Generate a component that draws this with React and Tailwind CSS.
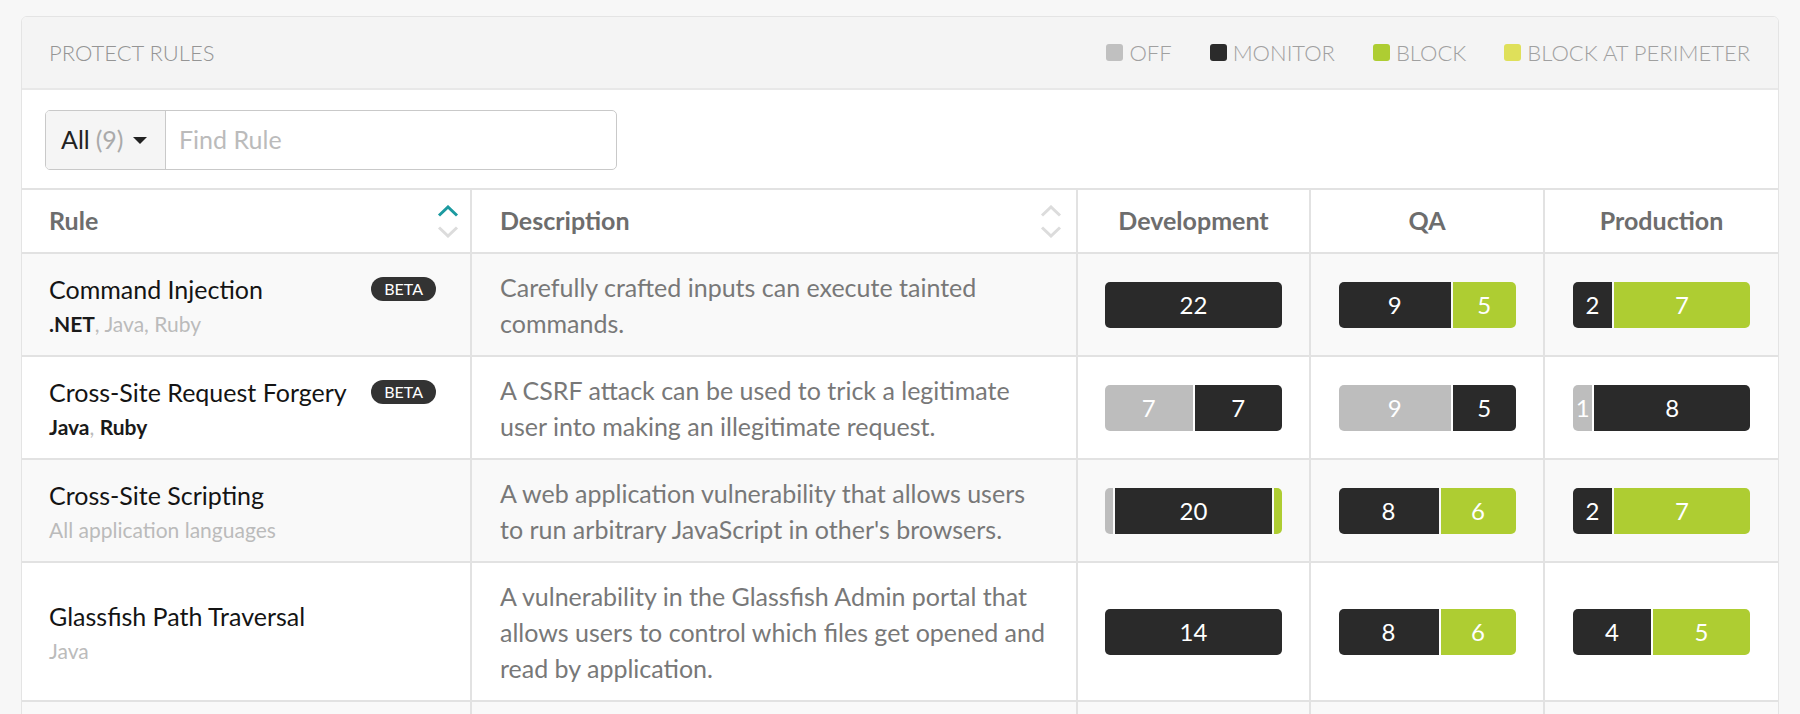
import React from 'react';

const COLORS = {
    off: 'bg-[#bdbdbd]',
    monitor: 'bg-[#2a2a2a]',
    block: 'bg-[#aecd32]',
};

const rules = [
    {
        name: 'Command Injection',
        beta: true,
        langs: [['.NET', true], ['Java', false], ['Ruby', false]],
        desc: 'Carefully crafted inputs can execute tainted commands.',
        dev: [['monitor', 22]],
        qa: [['monitor', 9], ['block', 5]],
        prod: [['monitor', 2], ['block', 7]],
    },
    {
        name: 'Cross-Site Request Forgery',
        beta: true,
        langs: [['Java', true], ['Ruby', true]],
        desc: 'A CSRF attack can be used to trick a legitimate user into making an illegitimate request.',
        dev: [['off', 7], ['monitor', 7]],
        qa: [['off', 9], ['monitor', 5]],
        prod: [['off', 1], ['monitor', 8]],
    },
    {
        name: 'Cross-Site Scripting',
        langs: [['All application languages', false]],
        desc: "A web application vulnerability that allows users to run arbitrary JavaScript in other's browsers.",
        dev: [['off', 1], ['monitor', 20], ['block', 1]],
        qa: [['monitor', 8], ['block', 6]],
        prod: [['monitor', 2], ['block', 7]],
    },
    {
        name: 'Glassfish Path Traversal',
        langs: [['Java', false]],
        desc: 'A vulnerability in the Glassfish Admin portal that allows users to control which files get opened and read by application.',
        dev: [['monitor', 14]],
        qa: [['monitor', 8], ['block', 6]],
        prod: [['monitor', 4], ['block', 5]],
    },
];

const SortIcon = ({ active }) => (
    <div className="flex flex-col items-center gap-[9px]">
        <svg width="22" height="12" viewBox="0 0 22 12" fill="none">
            <polyline points="2,10.5 11,2 20,10.5" stroke={active ? '#1c9aa0' : '#dcdcdc'} strokeWidth="3" />
        </svg>
        <svg width="22" height="12" viewBox="0 0 22 12" fill="none">
            <polyline points="2,1.5 11,10 20,1.5" stroke="#dcdcdc" strokeWidth="3" />
        </svg>
    </div>
);

const Bar = ({ segments }) => {
    const total = segments.reduce((s, [, n]) => s + n, 0);
    return (
        <div className="flex w-[177px] h-[46px] gap-[2px] rounded-[5px] overflow-hidden">
            {segments.map(([mode, n], i) => (
                <div
                    key={i}
                    className={`${COLORS[mode]} basis-0 min-w-0 flex items-center justify-center text-white text-[24px] leading-none`}
                    style={{ flexGrow: n }}
                >
                    {n / total > 0.07 ? n : ''}
                </div>
            ))}
        </div>
    );
};

const Legend = ({ color, label }) => (
    <div className="flex items-center gap-[6px]">
        <span className={`w-[17px] h-[17px] rounded-[3px] ${color}`}></span>
        <span>{label}</span>
    </div>
);

const cellBorder = 'border-t-2 border-[#e2e2e2]';

const App = () => {
    return (
        <div className="min-h-screen bg-[#f7f7f7] px-[21px] pt-[16px] font-['Lato',sans-serif]">
            <div className="bg-white border border-[#e4e4e4] rounded-[6px] overflow-hidden">
                {/* Header */}
                <div className="h-[73px] bg-[#f4f4f4] border-b-2 border-[#e8e8e8] flex items-center justify-between pl-[27px] pr-[28px]">
                    <h2 className="text-[22px] font-light text-[#959595]">PROTECT RULES</h2>
                    <div className="flex items-center gap-[38px] text-[22px] font-light text-[#a0a0a0]">
                        <Legend color="bg-[#c0c0c0]" label="OFF" />
                        <Legend color="bg-[#2b2b2b]" label="MONITOR" />
                        <Legend color="bg-[#aecd32]" label="BLOCK" />
                        <Legend color="bg-[#dfe05a]" label="BLOCK AT PERIMETER" />
                    </div>
                </div>

                {/* Filter */}
                <div className="pl-[23px] pt-[20px] pb-[18px]">
                    <div className="flex w-[572px] h-[60px] border border-[#c9c9c9] rounded-[5px] overflow-hidden">
                        <button className="w-[120px] flex items-center pl-[15px] bg-[#f5f5f5] border-r border-[#c9c9c9] text-[25px] text-[#222]">
                            <span>All</span>
                            <span className="text-[#aaa] ml-[6px]">(9)</span>
                            <svg width="14" height="7" viewBox="0 0 14 7" className="ml-[9px]">
                                <path d="M0 0 L14 0 L7 7 Z" fill="#222" />
                            </svg>
                        </button>
                        <input
                            className="flex-1 min-w-0 pl-[13px] text-[25px] text-[#333] placeholder-[#bbb] outline-none"
                            placeholder="Find Rule"
                        />
                    </div>
                </div>

                {/* Table */}
                <div className="grid grid-cols-[450px_606px_233px_234px_1fr]">
                    <div className={`h-[64px] ${cellBorder} border-r-2 flex items-center justify-between pl-[27px] pr-[11px]`}>
                        <span className="text-[25px] font-bold text-[#6d6d6d]">Rule</span>
                        <SortIcon active />
                    </div>
                    <div className={`h-[64px] ${cellBorder} border-r-2 flex items-center justify-between pl-[28px] pr-[14px]`}>
                        <span className="text-[25px] font-bold text-[#6d6d6d]">Description</span>
                        <SortIcon />
                    </div>
                    {['Development', 'QA', 'Production'].map((h, i) => (
                        <div
                            key={h}
                            className={`h-[64px] ${cellBorder} flex items-center justify-center text-[25px] font-bold text-[#6d6d6d] ${i < 2 ? 'border-r-2' : ''}`}
                        >
                            {h}
                        </div>
                    ))}

                    {rules.map((r, idx) => {
                        const bg = idx % 2 === 0 ? 'bg-[#f9f9f9]' : 'bg-white';
                        return (
                            <React.Fragment key={r.name}>
                                <div className={`${bg} ${cellBorder} border-r-2 flex flex-col justify-center pl-[27px] pr-[34px]`}>
                                    <div className="flex items-center justify-between">
                                        <span className="text-[25px] leading-[36px] text-[#141414]">{r.name}</span>
                                        {r.beta && (
                                            <span className="px-[13px] h-[24px] leading-[24px] rounded-full bg-[#333] text-white text-[16px]">
                                                BETA
                                            </span>
                                        )}
                                    </div>
                                    <div className="mt-[2px] text-[21px] leading-[30px] text-[#bbb]">
                                        {r.langs.map(([l, on], i) => (
                                            <React.Fragment key={l}>
                                                {i > 0 && ', '}
                                                <span className={on ? 'font-bold text-[#1a1a1a]' : ''}>{l}</span>
                                            </React.Fragment>
                                        ))}
                                    </div>
                                </div>
                                <div className={`${bg} ${cellBorder} border-r-2 pl-[28px] pr-[26px] pt-[15px] pb-[14px] text-[25px] leading-[36px] text-[#787878]`}>
                                    {r.desc}
                                </div>
                                <div className={`${bg} ${cellBorder} border-r-2 flex items-center justify-center`}>
                                    <Bar segments={r.dev} />
                                </div>
                                <div className={`${bg} ${cellBorder} border-r-2 flex items-center justify-center`}>
                                    <Bar segments={r.qa} />
                                </div>
                                <div className={`${bg} ${cellBorder} flex items-center justify-center`}>
                                    <Bar segments={r.prod} />
                                </div>
                            </React.Fragment>
                        );
                    })}

                    {/* next row, cut off by the viewport */}
                    <div className={`h-[103px] bg-[#f9f9f9] ${cellBorder} border-r-2`}></div>
                    <div className={`h-[103px] bg-[#f9f9f9] ${cellBorder} border-r-2`}></div>
                    <div className={`h-[103px] bg-[#f9f9f9] ${cellBorder} border-r-2`}></div>
                    <div className={`h-[103px] bg-[#f9f9f9] ${cellBorder} border-r-2`}></div>
                    <div className={`h-[103px] bg-[#f9f9f9] ${cellBorder}`}></div>
                </div>
            </div>
        </div>
    );
};

export default App;
